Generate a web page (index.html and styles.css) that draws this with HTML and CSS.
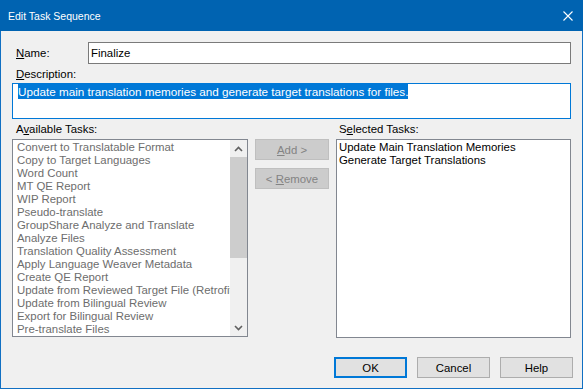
FILE: index.html
```
<!DOCTYPE html>
<html>

<head>
	<title>Edit Task Sequence</title>
	<link rel="stylesheet" href="styles.css">
</head>

<body>
	<div class="window">
		<div class="titlebar">
			<span class="title">Edit Task Sequence</span>
			<svg class="close" width="10" height="10" viewBox="0 0 10 10">
				<path d="M0.5 0.5L9.5 9.5M9.5 0.5L0.5 9.5" stroke="#fff" stroke-width="1.1" fill="none" />
			</svg>
		</div>
		<div class="content">
			<div class="name-row">
				<label class="name-label"><u>N</u>ame:</label>
				<div class="textbox">Finalize</div>
			</div>
			<label class="field-label"><u>D</u>escription:</label>
			<div class="textarea"><span class="selection">Update main translation memories and generate target translations for files.</span></div>
			<div class="tasks">
				<label class="list-label left">A<u>v</u>ailable Tasks:</label>
				<div></div>
				<label class="list-label right">S<u>e</u>lected Tasks:</label>
				<div class="listbox">
					<div class="items gray">
						<div>Convert to Translatable Format</div>
						<div>Copy to Target Languages</div>
						<div>Word Count</div>
						<div>MT QE Report</div>
						<div>WIP Report</div>
						<div>Pseudo-translate</div>
						<div>GroupShare Analyze and Translate</div>
						<div>Analyze Files</div>
						<div>Translation Quality Assessment</div>
						<div>Apply Language Weaver Metadata</div>
						<div>Create QE Report</div>
						<div>Update from Reviewed Target File (Retrofit)</div>
						<div>Update from Bilingual Review</div>
						<div>Export for Bilingual Review</div>
						<div>Pre-translate Files</div>
					</div>
					<div class="scrollbar">
						<div class="arrow">
							<svg width="9" height="6" viewBox="0 0 9 6">
								<path d="M1 5L4.5 1.5L8 5" stroke="#606060" stroke-width="1.6" fill="none" />
							</svg>
						</div>
						<div class="thumb"></div>
						<div class="track"></div>
						<div class="arrow">
							<svg width="9" height="6" viewBox="0 0 9 6">
								<path d="M1 1L4.5 4.5L8 1" stroke="#606060" stroke-width="1.6" fill="none" />
							</svg>
						</div>
					</div>
				</div>
				<div class="mid">
					<button class="disabled"><u>A</u>dd &gt;</button>
					<button class="disabled">&lt; <u>R</u>emove</button>
				</div>
				<div class="listbox selected">
					<div class="items">
						<div>Update Main Translation Memories</div>
						<div>Generate Target Translations</div>
					</div>
				</div>
			</div>
			<div class="footer">
				<button class="ok">OK</button>
				<button>Cancel</button>
				<button>Help</button>
			</div>
		</div>
	</div>
</body>

</html>
```
FILE: styles.css
```
html,
body {
	margin: 0;
	padding: 0;
	border: 0;
}

body {
	font-family: "Liberation Sans", Arial, sans-serif;
	font-size: 11.4px;
	color: #000;
	background: #f0f0f0;
}

.window {
	display: flex;
	flex-direction: column;
	width: 583px;
	height: 389px;
}

.titlebar {
	display: flex;
	align-items: center;
	justify-content: space-between;
	height: 31px;
	background: #0063b1;
	padding: 0 10px 0 8px;
	box-sizing: border-box;
}

.title {
	color: #fff;
	font-size: 10.5px;
	margin-top: 1px;
}

.close {
	margin-top: 1px;
}

.content {
	display: flex;
	flex-direction: column;
	flex: 1;
	padding: 11px 11px 0 11px;
	border: 1px solid #1170c3;
	border-top: 0;
	background: #f0f0f0;
}

.name-row {
	display: flex;
	align-items: center;
	height: 22px;
}

.name-label {
	width: 72px;
	padding-left: 4px;
}

.textbox {
	flex: 1;
	height: 22px;
	line-height: 20px;
	box-sizing: border-box;
	border: 1px solid #7a7a7a;
	background: #fff;
	padding-left: 2px;
}

.field-label {
	display: block;
	line-height: 15px;
	margin-top: 3px;
	padding-left: 4px;
}

.textarea {
	height: 36px;
	margin-top: 1px;
	box-sizing: border-box;
	border: 1px solid #0078d7;
	background: #fff;
	padding-left: 5px;
	font-size: 11.7px;
}

.selection {
	display: inline-block;
	line-height: 15px;
	background: #0078d7;
	color: #fff;
}

.tasks {
	display: grid;
	grid-template-columns: 236px 74px 235px;
	grid-template-rows: 15px 198px;
	column-gap: 7px;
	row-gap: 2px;
	margin-top: 3px;
}

.list-label {
	line-height: 15px;
}

.list-label.left {
	padding-left: 4px;
}

.list-label.right {
	padding-left: 3px;
}

.listbox {
	display: flex;
	border: 1px solid #828790;
	background: #fff;
	overflow: hidden;
}

.listbox.selected {
	height: 197px;
}

.items {
	flex: 1;
	min-width: 0;
	padding: 1px 0 0 4px;
	line-height: 13px;
	white-space: nowrap;
	overflow: hidden;
}

.selected .items {
	padding-left: 2px;
}

.items.gray {
	color: #6d6d6d;
}

.scrollbar {
	display: flex;
	flex-direction: column;
	width: 17px;
	background: #f0f0f0;
}

.arrow {
	display: flex;
	align-items: center;
	justify-content: center;
	height: 17px;
}

.thumb {
	height: 101px;
	background: #cdcdcd;
}

.track {
	flex: 1;
}

.mid {
	display: flex;
	flex-direction: column;
	gap: 8px;
}

button {
	font-family: inherit;
	font-size: inherit;
	height: 21px;
	padding: 0;
	border: 1px solid #adadad;
	background: #e1e1e1;
	color: #000;
}

button.disabled {
	width: 74px;
	background: #cccccc;
	border-color: #bfbfbf;
	color: #838383;
}

.footer {
	display: flex;
	justify-content: flex-end;
	gap: 10px;
	margin-top: 20px;
	margin-right: -2px;
}

.footer button {
	width: 73px;
}

.footer .ok {
	border: 2px solid #0078d7;
}
```
